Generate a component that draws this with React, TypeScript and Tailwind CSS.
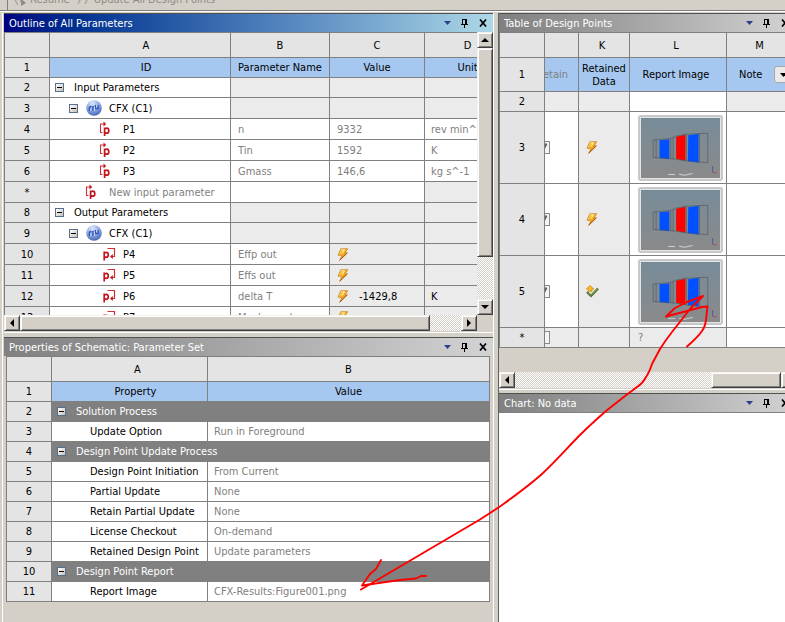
import type { ReactNode } from "react";

const TRACK =
  "bg-[conic-gradient(#ffffff_25%,#d4d0c8_0_50%,#ffffff_0_75%,#d4d0c8_0)] bg-[length:2px_2px]";
const BEVEL =
  "border border-t-[#f4f2ee] border-l-[#f4f2ee] border-r-[#404040] border-b-[#404040] bg-[#d4d0c8] shadow-[inset_1px_1px_0_#ffffff,inset_-1px_-1px_0_#808080]";
const LINE = "border-r border-b border-[#808080] p-0 font-normal";
const NUM = `${LINE} bg-[#e4e4e4] text-center`;
const HEAD = `${LINE} bg-[#e4e4e4] text-center`;
const BLUE = `${LINE} bg-[#a6c8f0] text-center`;
const SHADE = "bg-[#ebebeb]";

function TitleIcons() {
  return (
    <div className="flex items-center">
      <button aria-label="Menu" className="flex h-4 w-[18px] items-center justify-center">
        <svg width="7" height="4" viewBox="0 0 7 4">
          <path d="M0 0h7L3.5 4z" fill="#2b3f8c" />
        </svg>
      </button>
      <button aria-label="Pin" className="flex h-4 w-[18px] items-center justify-center">
        <svg width="8" height="9" viewBox="0 0 8 9" shapeRendering="crispEdges">
          <path d="M1 0h5v5h1v1H4v3H3V6H0V5h1zM2 1v4h2V1z" fill="#000" fillRule="evenodd" />
        </svg>
      </button>
      <button aria-label="Close" className="flex h-4 w-[18px] items-center justify-center">
        <svg width="8" height="8" viewBox="0 0 8 8">
          <path d="M1 0.5L7 7.5M7 0.5L1 7.5" stroke="#000" strokeWidth="1.7" />
        </svg>
      </button>
    </div>
  );
}

function TitleBar({ text, active, wide }: { text: string; active?: boolean; wide?: boolean }) {
  return (
    <div
      className={`flex h-[19px] items-center justify-between border-t border-[#505050] bg-linear-to-r pl-[5px] text-white ${
        active ? "from-[#000080] to-[#add8e6]" : "from-[#808080] to-[#d3d3d3]"
      } ${wide ? "pr-[3px]" : "pr-px"}`}
    >
      <h2>{text}</h2>
      <TitleIcons />
    </div>
  );
}

function Toggle() {
  return (
    <button
      aria-label="Collapse"
      className="flex size-[9px] shrink-0 items-center justify-center border border-[#55718f] bg-linear-to-br from-white to-[#c8c0b4]"
    >
      <span className="h-px w-[5px] bg-black" />
    </button>
  );
}

function CfxIcon() {
  return (
    <svg width="16" height="16" viewBox="0 0 16 16" className="shrink-0">
      <defs>
        <radialGradient id="ball" cx="0.4" cy="0.2" r="0.85">
          <stop offset="0" stopColor="#dbe7fc" />
          <stop offset="0.55" stopColor="#86a4e2" />
          <stop offset="1" stopColor="#4060b0" />
        </radialGradient>
      </defs>
      <circle cx="8" cy="8" r="7.8" fill="url(#ball)" />
      <path d="M3.500 11V8q0-1.500 2-1.500M7 6v5M9.500 5v3.500h2.500V5" fill="none" stroke="#3558b8" strokeWidth="1.700" />
      <path d="M4.800 11V8.500M8.300 6.500V11M10.800 5v2.500" stroke="#e8f0ff" strokeWidth="0.900" />
    </svg>
  );
}

function InputIcon() {
  return (
    <svg width="12" height="16" viewBox="0 0 12 16" className="shrink-0">
      <path d="M3.500 11.500H1.500V3H6" fill="none" stroke="#cc3035" strokeWidth="1.100" />
      <path d="M4.500 0.500L7.200 3L4.500 5.500z" fill="#c4161c" />
      <path d="M5.600 6.500v8.500M5.500 8.500q0.800-1.300 2.200-1.300q2.100 0 2.100 2.500T7.700 12.200Q6.200 12.200 5.500 11" fill="none" stroke="#c4161c" strokeWidth="1.700" />
    </svg>
  );
}

function OutputIcon() {
  return (
    <svg width="13" height="14" viewBox="0 0 13 14" className="shrink-0">
      <path d="M4.500 1.500H11.500V9.500H8.500" fill="none" stroke="#cc3035" strokeWidth="1.200" />
      <path d="M9.800 7L7 9.500L9.800 12z" fill="#c4161c" />
      <path d="M1.200 4.500v9M1.200 6.500Q2 5.300 3.200 5.300q2.100 0 2.100 2.500T3.200 10.300Q2 10.300 1.200 9" fill="none" stroke="#c4161c" strokeWidth="1.700" />
    </svg>
  );
}

function Bolt() {
  return (
    <svg width="12" height="13" viewBox="0 0 12 13" className="shrink-0">
      <defs>
        <linearGradient id="bolt" x1="0" y1="0" x2="1" y2="1">
          <stop offset="0" stopColor="#ffe070" />
          <stop offset="0.45" stopColor="#f6b428" />
          <stop offset="1" stopColor="#b84c00" />
        </linearGradient>
      </defs>
      <path d="M3.800 0.700H10.800L8 4.700H10.300L2.500 12.500L5 7.300H1z" fill="url(#bolt)" stroke="#c87c14" strokeWidth="0.700" />
      <path d="M4.600 1.800H7.500L5.200 5.500" fill="none" stroke="#fff3b8" strokeWidth="0.900" />
      <path d="M10.300 5L3 12" stroke="#a84c08" strokeWidth="0.900" />
    </svg>
  );
}

function UpdatedIcon() {
  return (
    <svg width="13" height="13" viewBox="0 0 13 13" className="shrink-0">
      <path d="M1 7L5 10.800L12 3.500" fill="none" stroke="#4c6c28" strokeWidth="2.400" />
      <path d="M1.600 7.200L5 10.200L11.600 3.600" fill="none" stroke="#8fae58" strokeWidth="1" />
      <path d="M4 0.500L7.800 4H6V6.300H2.200V4H0.400z" fill="#fbb829" stroke="#d08c14" strokeWidth="0.800" />
    </svg>
  );
}

function Arrow({ dir }: { dir: "up" | "down" | "left" | "right" }) {
  const d = {
    up: "M4 2L8 6H0z",
    down: "M0 2H8L4 6z",
    left: "M6 0V8L2 4z",
    right: "M2 0V8L6 4z",
  }[dir];
  return (
    <button aria-label={`Scroll ${dir}`} className={`flex size-4 shrink-0 items-center justify-center ${BEVEL}`}>
      <svg width="8" height="8" viewBox="0 0 8 8">
        <path d={d} fill="#000" />
      </svg>
    </button>
  );
}

type Row = {
  n: string;
  kind: "group" | "system" | "input" | "new" | "output";
  id: string;
  name?: string;
  value?: string;
  unit?: string;
};

const OUTLINE: Row[] = [
  { n: "2", kind: "group", id: "Input Parameters" },
  { n: "3", kind: "system", id: "CFX (C1)" },
  { n: "4", kind: "input", id: "P1", name: "n", value: "9332", unit: "rev min^-1" },
  { n: "5", kind: "input", id: "P2", name: "Tin", value: "1592", unit: "K" },
  { n: "6", kind: "input", id: "P3", name: "Gmass", value: "146,6", unit: "kg s^-1" },
  { n: "*", kind: "new", id: "New input parameter" },
  { n: "8", kind: "group", id: "Output Parameters" },
  { n: "9", kind: "system", id: "CFX (C1)" },
  { n: "10", kind: "output", id: "P4", name: "Effp out" },
  { n: "11", kind: "output", id: "P5", name: "Effs out" },
  { n: "12", kind: "output", id: "P6", name: "delta T", value: "-1429,8", unit: "K" },
  { n: "13", kind: "output", id: "P7", name: "Mach nead" },
];

function IdCell({ row }: { row: Row }) {
  if (row.kind === "group")
    return (
      <div className="flex items-center gap-[10px] pl-[5px]">
        <Toggle />
        {row.id}
      </div>
    );
  if (row.kind === "system")
    return (
      <div className="flex items-center pl-[19px]">
        <Toggle />
        <span className="ml-2 mr-[7px]">
          <CfxIcon />
        </span>
        {row.id}
      </div>
    );
  if (row.kind === "new")
    return (
      <div className="flex items-center gap-3 pl-[35px] text-[#808080]">
        <InputIcon />
        {row.id}
      </div>
    );
  return (
    <div className={`flex items-center ${row.kind === "input" ? "gap-3 pl-[49px]" : "gap-[7px] pl-[53px]"}`}>
      {row.kind === "input" ? <InputIcon /> : <OutputIcon />}
      {row.id}
    </div>
  );
}

function Outline() {
  return (
    <section>
      <TitleBar text="Outline of All Parameters" active />
      <div className="flex h-[283px]">
        <div className="min-w-0 flex-1 overflow-hidden">
          <table className="w-full min-w-[507px] table-fixed border-separate border-spacing-0 border-t border-l border-[#808080]">
            <colgroup>
              <col className="w-[45px]" />
              <col className="w-[181px]" />
              <col className="w-[99px]" />
              <col className="w-[95px]" />
              <col />
            </colgroup>
            <thead>
              <tr className="h-[25px]">
                <th className={HEAD} />
                <th className={`${HEAD} pl-3`}>A</th>
                <th className={HEAD}>B</th>
                <th className={HEAD}>C</th>
                <th className={HEAD}>D</th>
              </tr>
              <tr className="h-5">
                <th className={NUM}>1</th>
                <th className={`${BLUE} pl-3`}>ID</th>
                <th className={BLUE}>Parameter Name</th>
                <th className={BLUE}>Value</th>
                <th className={BLUE}>Unit</th>
              </tr>
            </thead>
            <tbody>
              {OUTLINE.map((r) => {
                const plain = r.kind === "group" || r.kind === "system";
                return (
                  <tr key={r.n} className={r.kind === "group" ? "h-5" : "h-[21px]"}>
                    <th className={NUM}>{r.n}</th>
                    <td className={`${LINE} bg-white`}>
                      <IdCell row={r} />
                    </td>
                    <td className={`${LINE} text-[#808080] ${plain ? SHADE : "bg-white"}`}>
                      <div className="pl-[7px]">{r.name}</div>
                    </td>
                    <td className={`${LINE} ${plain || r.kind === "output" ? SHADE : "bg-white text-[#808080]"}`}>
                      <div className="flex items-center gap-[10px] pl-[7px]">
                        {r.kind === "output" && <Bolt />}
                        {r.value}
                      </div>
                    </td>
                    <td className={`${LINE} ${r.kind === "input" ? "bg-white text-[#808080]" : SHADE}`}>
                      <div className="pl-[6px]">{r.unit}</div>
                    </td>
                  </tr>
                );
              })}
            </tbody>
          </table>
        </div>
        <div className={`flex w-4 flex-col ${TRACK}`}>
          <Arrow dir="up" />
          <div className={`h-[209px] ${BEVEL}`} />
          <div className="flex-1" />
          <Arrow dir="down" />
        </div>
      </div>
      <div className="flex h-4 pr-4">
        <div className={`flex flex-1 ${TRACK}`}>
          <Arrow dir="left" />
          <div className={`flex-1 ${BEVEL}`} />
          <div className="w-[31px]" />
          <Arrow dir="right" />
        </div>
      </div>
      <div className="mt-px mb-1 h-px bg-white" />
    </section>
  );
}

const PROPS: { n: number; label: string; value?: string }[] = [
  { n: 2, label: "Solution Process" },
  { n: 3, label: "Update Option", value: "Run in Foreground" },
  { n: 4, label: "Design Point Update Process" },
  { n: 5, label: "Design Point Initiation", value: "From Current" },
  { n: 6, label: "Partial Update", value: "None" },
  { n: 7, label: "Retain Partial Update", value: "None" },
  { n: 8, label: "License Checkout", value: "On-demand" },
  { n: 9, label: "Retained Design Point", value: "Update parameters" },
  { n: 10, label: "Design Point Report" },
  { n: 11, label: "Report Image", value: "CFX-Results:Figure001.png" },
];

function Properties() {
  return (
    <section>
      <TitleBar text="Properties of Schematic: Parameter Set" />
      <div className="pr-[3px] pl-[2px]">
        <table className="w-full table-fixed border-separate border-spacing-0 border-t border-l border-[#808080]">
          <colgroup>
            <col className="w-[45px]" />
            <col className="w-[156px]" />
            <col />
          </colgroup>
          <thead>
            <tr className="h-[25px]">
              <th className={HEAD} />
              <th className={`${HEAD} pl-4`}>A</th>
              <th className={HEAD}>B</th>
            </tr>
            <tr className="h-5">
              <th className={NUM}>1</th>
              <th className={`${BLUE} pl-3`}>Property</th>
              <th className={BLUE}>Value</th>
            </tr>
          </thead>
          <tbody>
            {PROPS.map((p) => (
              <tr key={p.n} className="h-5">
                <th className={NUM}>{p.n}</th>
                {p.value ? (
                  <>
                    <td className={`${LINE} bg-white`}>
                      <div className="pl-[38px]">{p.label}</div>
                    </td>
                    <td className={`${LINE} bg-white text-[#808080]`}>
                      <div className="pl-[6px]">{p.value}</div>
                    </td>
                  </>
                ) : (
                  <td colSpan={2} className={`${LINE} bg-[#808080] text-white`}>
                    <div className="flex items-center gap-[10px] pl-[5px]">
                      <Toggle />
                      {p.label}
                    </div>
                  </td>
                )}
              </tr>
            ))}
          </tbody>
        </table>
      </div>
    </section>
  );
}

function Thumbnail() {
  return (
    <button
      aria-label="Report image"
      className="ml-2 block rounded-[3px] border-2 border-[#c8c8c8] bg-[#e4e4e4] p-px"
    >
      <svg width="79" height="60" viewBox="0 0 81 61" preserveAspectRatio="none">
        <defs>
          <linearGradient id="sky" x1="0" y1="0" x2="0" y2="1">
            <stop offset="0" stopColor="#778c99" />
            <stop offset="1" stopColor="#8a8a8a" />
          </linearGradient>
        </defs>
        <rect width="81" height="61" fill="url(#sky)" />
        <path d="M19 22.500L29 21.500V42L19 41z" fill="#0050ff" />
        <path d="M36 19L45.500 17V43.500L36 41.500z" fill="#ff0000" />
        <path d="M48.500 17.500L59 16V45.500L48 44z" fill="#0050ff" />
        <path
          d="M12.500 22.500L29 21L36 18.500L46 16.500L68.500 15.500V45.500L46 43.500L33 41.500L12.500 40zM15.500 22V40.500M30.500 21V41.500M33 20V42M46.500 17V43M60 16V45"
          fill="none"
          stroke="#4c565d"
          strokeOpacity="0.800"
          strokeWidth="0.800"
        />
        <path d="M28 57.500h7M39 57l4 1h4M47 57.500l6-1" stroke="#d0d4d6" fill="none" />
        <path d="M73.500 49v6" stroke="#4a58a8" />
        <path d="M73.500 55.500h4" stroke="#b05050" />
      </svg>
    </button>
  );
}

function Retain({ checked, label }: { checked: boolean; label: string }) {
  return (
    <div className="flex overflow-hidden">
      <label className="relative -ml-2 flex size-[13px] shrink-0 items-center justify-center">
        <input
          type="checkbox"
          defaultChecked={checked}
          aria-label={label}
          className="absolute inset-0 size-[13px] appearance-none border border-[#8a8a8a] bg-[#f4f4f4]"
        />
        {checked && (
          <svg width="9" height="9" viewBox="0 0 9 9" className="pointer-events-none relative">
            <path d="M1 4L4 7.500L7.500 0.500" fill="none" stroke="#606060" strokeWidth="2" />
          </svg>
        )}
      </label>
    </div>
  );
}

function DesignPoints() {
  const points: { n: number; icon: ReactNode }[] = [
    { n: 3, icon: <Bolt /> },
    { n: 4, icon: <Bolt /> },
    { n: 5, icon: <UpdatedIcon /> },
  ];
  return (
    <section>
      <TitleBar text="Table of Design Points" wide />
      <table className="w-full table-fixed border-separate border-spacing-0 border-t border-l border-[#808080]">
        <colgroup>
          <col className="w-[45px]" />
          <col className="w-[34px]" />
          <col className="w-[51px]" />
          <col className="w-[97px]" />
          <col />
        </colgroup>
        <thead>
          <tr className="h-[25px]">
            <th className={HEAD} />
            <th className={HEAD} />
            <th className={`${HEAD} pr-1`}>K</th>
            <th className={`${HEAD} pr-1`}>L</th>
            <th className={`${HEAD} pr-1`}>M</th>
          </tr>
          <tr className="h-[34px]">
            <th className={NUM}>1</th>
            <th className={`${BLUE} text-[#808080]`}>
              <div className="flex justify-end overflow-hidden pr-[10px]">Retain</div>
            </th>
            <th className={`${BLUE} whitespace-normal`}>Retained Data</th>
            <th className={`${BLUE} pr-1`}>Report Image</th>
            <th className={BLUE}>
              <div className="flex items-center gap-3 pl-3">
                Note
                <button
                  aria-label="Note options"
                  className="flex h-[17px] w-[18px] items-center justify-center rounded-[3px] border border-[#a8a8a8] bg-[#eaeaea]"
                >
                  <svg width="7" height="4" viewBox="0 0 7 4">
                    <path d="M0 0h7L3.500 4z" fill="#000" />
                  </svg>
                </button>
              </div>
            </th>
          </tr>
        </thead>
        <tbody>
          <tr className="h-5">
            <th className={NUM}>2</th>
            <td className={`${LINE} ${SHADE}`} />
            <td className={`${LINE} ${SHADE}`} />
            <td className={`${LINE} bg-white`} />
            <td className={`${LINE} ${SHADE}`} />
          </tr>
          {points.map((p) => (
            <tr key={p.n} className="h-[72px]">
              <th className={NUM}>{p.n}</th>
              <td className={`${LINE} bg-white`}>
                <Retain checked label={`Retain design point ${p.n}`} />
              </td>
              <td className={`${LINE} ${SHADE}`}>
                <div className="pl-[7px]">{p.icon}</div>
              </td>
              <td className={`${LINE} bg-white`}>
                <Thumbnail />
              </td>
              <td className={`${LINE} bg-white`} />
            </tr>
          ))}
          <tr className="h-5">
            <th className={NUM}>*</th>
            <td className={`${LINE} ${SHADE}`}>
              <Retain checked={false} label="Retain new design point" />
            </td>
            <td className={`${LINE} ${SHADE}`} />
            <td className={`${LINE} ${SHADE} text-[#808080]`}>
              <div className="pl-2">?</div>
            </td>
            <td className={`${LINE} bg-white`} />
          </tr>
        </tbody>
      </table>
      <div className={`mt-6 flex h-4 ${TRACK}`}>
        <Arrow dir="left" />
        <div className="flex-1" />
        <div className={`w-[70px] ${BEVEL}`} />
        <Arrow dir="right" />
      </div>
      <div className="mt-px mb-[3px] h-px bg-white" />
    </section>
  );
}

export default function App() {
  return (
    <div className="relative flex min-h-screen flex-col overflow-hidden bg-[#d4d0c8] font-['Tahoma','DejaVu_Sans_Condensed','Noto_Sans',sans-serif] text-[11px] leading-[13px] whitespace-nowrap text-black">
      <div className="flex h-[10px] items-end pl-[7px]">
        <div className="flex h-[10px] flex-1 items-end gap-2 overflow-hidden border-l border-[#808080] pb-1 pl-[6px] text-[#8c8a84]">
          <button className="flex items-end gap-1">
            <svg width="12" height="12" viewBox="0 0 12 12">
              <path d="M0 4L4 11M4 2L8 9" fill="none" stroke="#a8a6a0" strokeWidth="1.500" />
              <path d="M7 5L12 9L7 12z" fill="#8c8a84" />
            </svg>
            Resume
          </button>
          <button className="flex items-end gap-1">
            <svg width="12" height="12" viewBox="0 0 12 12">
              <path d="M4 2L0 10M11 2L7 10" fill="none" stroke="#a8a6a0" strokeWidth="1.500" />
            </svg>
            Update All Design Points
          </button>
        </div>
      </div>
      <div className="mb-px h-[2px] border-b border-white bg-[#808080]" />
      <main className="-mr-3 grid flex-1 grid-cols-[minmax(0,493fr)_minmax(0,304fr)]">
        <div className="flex pl-[2px]">
          <div className="min-w-0 flex-1 border-l border-white pl-px">
            <Outline />
            <Properties />
          </div>
        </div>
        <div className="flex border-l border-white pl-1">
          <div className="flex min-w-0 flex-1 flex-col border-l border-[#606060]">
            <DesignPoints />
            <section className="flex flex-1 flex-col">
              <TitleBar text="Chart: No data" wide />
              <div className="flex-1 border-t border-[#808080] bg-white" />
            </section>
          </div>
        </div>
      </main>
      <svg className="pointer-events-none absolute top-0 left-0" width="785" height="622" viewBox="0 0 785 622">
        <g fill="none" stroke="#ff0000" strokeWidth="1.900" strokeLinecap="round" strokeLinejoin="round">
          <path d="M361 589.500L480 519.500L500 506.500C520 492 530 485 543 473C556 461 568 447 580 435C590 425 598 418 606 411L625 396L637 387Q643 383 646 377Q649 373 652 364L660 349Q665 341 672 332L690 309L703 296L687 302L675 308L666 316.500L687 311L702 307L707.500 306.500L706 320Q705 327 702 331Q698 337 687 346.500" />
          <path d="M381 560L376 569L370 574L362 585.500L372 584L400 580L416 578.500L421 576H426" />
        </g>
      </svg>
    </div>
  );
}
